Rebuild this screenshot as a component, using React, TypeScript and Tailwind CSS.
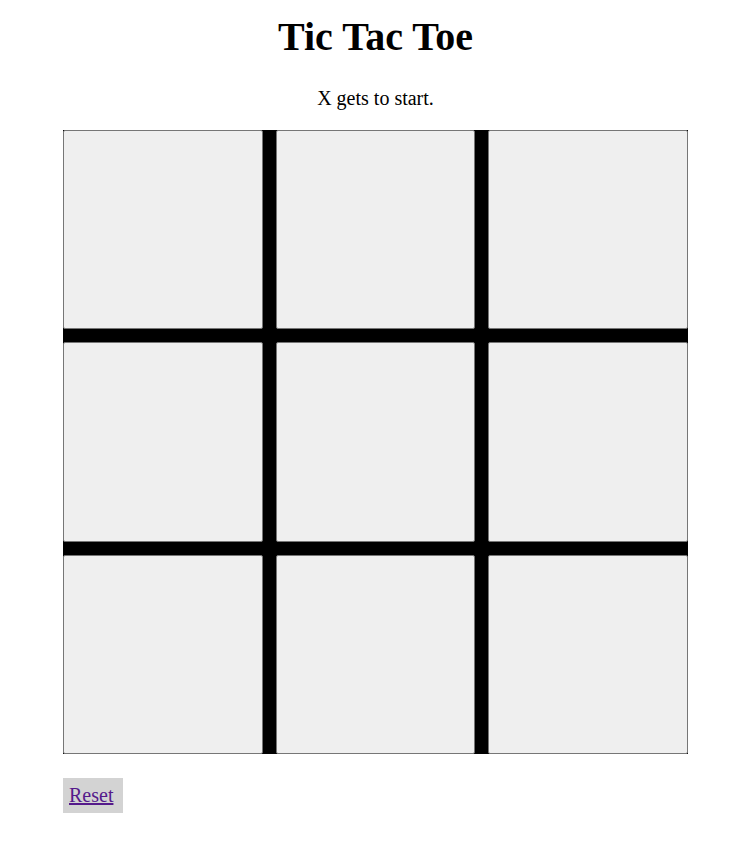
import React from "react";

export default function App() {
  const cells = Array.from({ length: 9 });
  return (
    <div
      className="min-h-[855px] bg-white text-black pt-[14px] pl-[63px]"
      style={{ fontFamily: '"Liberation Serif", "Times New Roman", serif' }}
    >
      <div className="w-[625px]">
        <h1 className="text-center text-[40px] leading-[46px] font-bold m-0">
          Tic Tac Toe
        </h1>
        <p className="text-center text-[20px] leading-[23px] mt-[27px]">
          X gets to start.
        </p>
        <div className="mt-[20px] w-[625px] h-[624px] grid grid-cols-3 grid-rows-3 gap-[13px] bg-black">
          {cells.map((_, i) => (
            <button
              key={i}
              className="bg-[#efefef] border border-[#767676] rounded-[2px] w-full h-full"
            />
          ))}
        </div>
        <div className="mt-[24px]">
          <button className="bg-[#d3d3d3] pl-[6px] pr-[10px] py-[6px] text-[20px] leading-[23px] text-[#551a8b] underline">
            Reset
          </button>
        </div>
      </div>
    </div>
  );
}
